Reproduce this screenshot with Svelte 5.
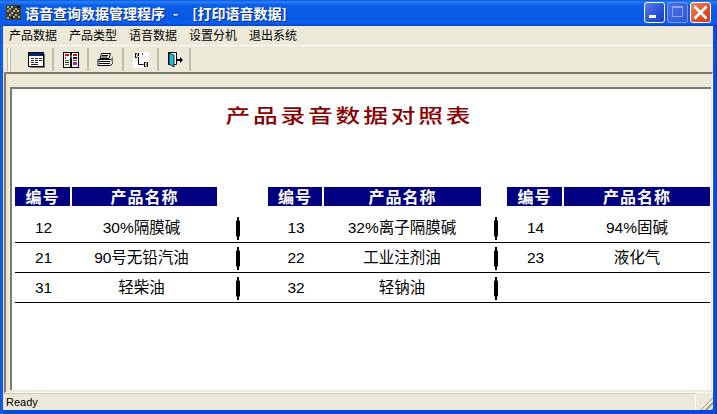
<script>
  const menus = ['产品数据', '产品类型', '语音数据', '设置分机', '退出系统'];
  const rows = [
    [['12', '30%隔膜碱'], ['13', '32%离子隔膜碱'], ['14', '94%固碱']],
    [['21', '90号无铅汽油'], ['22', '工业注剂油'], ['23', '液化气']],
    [['31', '轻柴油'], ['32', '轻钠油'], ['', '']]
  ];
</script>

<div class="window">
  <header class="titlebar">
    <svg class="appicon" width="15" height="15" viewBox="0 0 15 15">
      <rect width="15" height="15" fill="#3e3e30" />
      <path d="M1 1h2v2H1zM5 1h2v2H5zM3 3h2v2H3zM9 3h2v2H9zM1 5h2v2H1zM7 5h2v2H7zM11 5h2v2h-2zM5 7h2v2H5zM9 9h2v2H9zM3 9h2v2H3zM7 11h2v2H7zM12 11h2v2h-2zM1 12h2v2H1z" fill="#b0a880" />
      <path d="M11 1h3v2h-3zM5 12h2v2H5z" fill="#111" />
    </svg>
    <span class="title">语音查询数据管理程序<span class="dash">-</span>[打印语音数据]</span>
    <div class="caption-btns">
      <div class="cbtn min"><i></i></div>
      <div class="cbtn max"><i></i></div>
      <div class="cbtn close">
        <svg width="21" height="21" viewBox="0 0 21 21"><path d="M4.500 4.500l12 12M16.500 4.500l-12 12" stroke="#fff" stroke-width="2.600" /></svg>
      </div>
    </div>
  </header>

  <div class="frame">
    <nav class="menubar">
      {#each menus as m}
        <span class="menu">{m}</span>
      {/each}
    </nav>

    <div class="toolbar">
      <span class="grip"></span>
      <button class="tool first" aria-label="产品数据">
        <svg width="17" height="16" viewBox="0 0 17 16">
          <rect x="0.5" y="0.5" width="15" height="14" fill="#fff" stroke="#000" />
          <rect x="1" y="1" width="14" height="3" fill="#0a246a" />
          <path d="M3 6h3v1H3zM7 6h3v1H7zM11 6h3v1h-3zM3 8h3v1H3zM7 8h3v1H7zM11 8h3v1h-3zM3 10h3v1H3zM7 10h3v1H7zM3 12h7v1H3z" fill="#222" />
          <path d="M16 2h1v14H2v-1h14z" fill="#777" />
        </svg>
      </button>
      <button class="tool" aria-label="产品类型">
        <svg width="16" height="16" viewBox="0 0 16 16">
          <rect x="0.5" y="0.5" width="15" height="15" fill="#fff" stroke="#000" />
          <rect x="7" y="1" width="2" height="14" fill="#000" />
          <path d="M2 2h4v2H2zM10 2h4v2h-4zM2 5h1v2H2z" fill="#e01010" />
          <path d="M2 8h4v1H2zM10 8h4v1h-4zM2 12h4v1H2z" fill="#0a8a20" />
          <path d="M10 5h4v2h-4zM2 10h4v1H2z" fill="#222" />
          <path d="M10 10h4v3h-4z" fill="#c018b0" />
          <path d="M7 3h2v3H7z" fill="#108080" />
        </svg>
      </button>
      <button class="tool" aria-label="打印">
        <svg width="17" height="16" viewBox="0 0 17 16">
          <path d="M4.500 1.500h9l-1.500 5h-9z" fill="#fff" stroke="#000" />
          <path d="M1 7.500h14.500v4l-2 2H1z" fill="#fff" stroke="#000" />
          <path d="M2 9.500h11M2 11.500h11M5 3.500h6M4.500 5h6" stroke="#000" />
          <path d="M14 7l2-3v6l-1 2z" fill="#777" />
        </svg>
      </button>
      <button class="tool" aria-label="语音">
        <svg width="16" height="16" viewBox="0 0 16 16">
          <rect width="16" height="16" fill="#fff" />
          <path d="M5.500 5v7.500h5" fill="none" stroke="#000" />
          <path d="M2 1h2v1H3v3h1v1H2zM5 1h1v3H5z" fill="#000" />
          <rect x="4" y="2" width="1" height="3" fill="#a09020" />
          <path d="M11 10h2v1h-1v3h1v1h-2zM14 10h1v5h-1z" fill="#000" />
          <rect x="13" y="11" width="1" height="3" fill="#a09020" />
          <rect x="9" y="1" width="1" height="2" fill="#555" />
        </svg>
      </button>
      <button class="tool last" aria-label="退出">
        <svg width="16" height="18" viewBox="0 0 16 18">
          <path d="M1.500 1.500h8v12h-8z" fill="#fff" stroke="#000" />
          <path d="M2 2l5 2v12l-5-3z" fill="#18c0d8" stroke="#000" stroke-width="0.800" />
          <path d="M10 8h3V6l3 3-3 3v-2h-3z" fill="#000" />
        </svg>
      </button>
    </div>

    <main class="workspace">
      <div class="page">
        <h1><span>产品录音数据对照表</span></h1>
        <div class="report">
          {#each [0, 1, 2] as g}
            <div class="head id">编号</div>
            <div class="head">产品名称</div>
            {#if g < 2}<div></div>{/if}
          {/each}

          {#each rows as row}
            <div class="row">
              {#each row as group, g}
                <div class="cell">{group[0]}</div>
                <div class="cell name n{g}">{group[1]}</div>
                {#if g < 2}<div class="gap g{g}"><span class="tick"></span></div>{/if}
              {/each}
            </div>
          {/each}
        </div>
      </div>
    </main>

    <footer class="statusbar">
      <span class="ready">Ready</span>
      <span class="sizer"></span>
    </footer>
  </div>
</div>

<style>
  :global(body) {
    margin: 0;
    overflow: hidden;
    background: #0a3fd0;
  }

  .window {
    width: 717px;
    height: 414px;
    display: flex;
    flex-direction: column;
    background: linear-gradient(to right, #0a3cc8 0, #1a6cf0 1px, #0a48dc 3px, #0a48dc 713px, #0a5ae8 714px, #0838c0 717px);
    font-family: "Liberation Sans", "Noto Sans CJK SC", sans-serif;
    color: #000;
  }

  .titlebar {
    height: 26px;
    flex: none;
    display: flex;
    align-items: center;
    padding: 0 6px 0 6px;
    box-sizing: border-box;
    background: linear-gradient(to bottom, #0a5ae0 0, #2a80f4 2px, #0a5ee8 5px, #0458e4 18px, #0a60ee 23px, #0340c8 26px);
  }

  .appicon {
    margin-right: 4px;
    margin-bottom: 1px;
  }

  .title {
    font-family: "Noto Sans CJK SC", sans-serif;
    font-size: 14px;
    font-weight: 700;
    line-height: 16px;
    color: #fff;
    text-shadow: 1px 1px 0 #0f2a90;
    white-space: pre;
    margin-bottom: 1px;
  }

  .dash {
    margin: 0 14px 0 8px;
  }

  .caption-btns {
    margin-left: auto;
    display: flex;
    gap: 2px;
    margin-bottom: 1px;
  }

  .cbtn {
    width: 21px;
    height: 21px;
    box-sizing: border-box;
    border: 1px solid #fff;
    border-radius: 3px;
    background: linear-gradient(135deg, #5a80ec, #2a50d8 60%, #2040c0);
    position: relative;
  }

  .cbtn svg {
    position: absolute;
    left: -1px;
    top: -1px;
  }

  .cbtn.min i {
    position: absolute;
    left: 4px;
    top: 12px;
    width: 7px;
    height: 3px;
    background: #fff;
  }

  .cbtn.max {
    border-color: #7a9cf0;
    background: linear-gradient(135deg, #4a70e4, #3058d8);
  }

  .cbtn.max i {
    position: absolute;
    left: 4px;
    top: 3px;
    width: 11px;
    height: 11px;
    box-sizing: border-box;
    border: 1px solid #86a4f0;
    border-top-width: 2px;
  }

  .cbtn.close {
    background: linear-gradient(135deg, #ec8a68, #e0582e 50%, #c83a12);
  }

  .frame {
    flex: 1;
    min-height: 0;
    display: flex;
    flex-direction: column;
    margin: 0 4px 4px 3px;
    background: #ece9d8;
  }

  .menubar {
    height: 20px;
    flex: none;
    display: flex;
    align-items: center;
    gap: 12px;
    padding: 0 0 2px 6px;
    font-family: "Noto Sans CJK SC", sans-serif;
    font-size: 12px;
    border-bottom: 1px solid #fff;
    box-sizing: border-box;
  }

  .toolbar {
    height: 26px;
    flex: none;
    display: flex;
    align-items: stretch;
    padding: 2px 0 1px 4px;
    box-sizing: border-box;
  }

  .grip {
    width: 2px;
    background: #f8f6ee;
    border: 1px solid #bdbaa8;
    border-width: 0 1px;
  }

  .tool {
    appearance: none;
    border: 0;
    border-right: 2px solid #c0bdac;
    background: none;
    padding: 0;
    width: 35px;
    display: flex;
    align-items: center;
    justify-content: center;
    box-sizing: border-box;
  }

  .tool.first {
    width: 43px;
    padding-left: 9px;
  }

  .tool.last {
    width: 32px;
    padding-left: 2px;
  }

  .workspace {
    flex: 1;
    min-height: 0;
    margin-left: 1px;
    padding: 13px 2px 2px 4px;
    border-top: 2px solid #7c7a6c;
    border-left: 2px solid #7c7a6c;
    border-right: 1px solid #fff;
    border-bottom: 1px solid #fbfaf4;
    box-sizing: border-box;
    background: #ece9d8;
  }

  .page {
    height: 100%;
    box-sizing: border-box;
    background: #fff;
    border: 2px solid #7c7a6c;
    border-width: 2px 0 0 2px;
    margin-right: -1px;
    padding: 0 0 0 3px;
    overflow: hidden;
  }

  h1 {
    margin: 0;
    padding: 14px 28px 0 0;
    height: 98px;
    box-sizing: border-box;
    text-align: center;
    font-family: "Noto Sans CJK SC", sans-serif;
    font-size: 19px;
    font-weight: 500;
    line-height: 24px;
    letter-spacing: 2.200px;
    color: #8b0000;
  }

  h1 span {
    display: inline-block;
    transform: scaleX(1.3);
  }

  .report {
    display: grid;
    grid-template-columns: 57px 146px 50px 56px 158px 25px 57px 147px;
    width: 696px;
  }

  .head {
    height: 19px;
    margin-right: 1px;
    background: #000080;
    color: #fff;
    font-family: "Noto Sans CJK SC", sans-serif;
    font-weight: 700;
    font-size: 16px;
    line-height: 19px;
    text-align: center;
    letter-spacing: 1px;
  }

  .head.id {
    margin-right: 2px;
  }

  .row {
    grid-column: 1 / -1;
    display: grid;
    grid-template-columns: subgrid;
    height: 30px;
    margin-right: 1px;
    align-items: center;
    border-bottom: 1px solid #000;
    box-sizing: border-box;
  }

  .report > .row:nth-child(9) {
    height: 37px;
    padding-top: 7px;
  }

  .cell {
    text-align: center;
    font-size: 15.500px;
    line-height: 20px;
  }

  .cell.n0 {
    padding-right: 7px;
  }

  .cell.n1 {
    padding-right: 2px;
  }

  .gap {
    display: flex;
    height: 100%;
    align-items: center;
    padding-top: 2px;
    box-sizing: border-box;
  }

  .gap.g0 {
    padding-left: 18px;
  }

  .gap.g1 {
    padding-left: 12px;
  }

  .tick {
    display: block;
    width: 4px;
    height: 23px;
    background: #000;
    clip-path: polygon(25% 0, 75% 0, 75% 13%, 100% 18%, 100% 82%, 75% 87%, 75% 100%, 25% 100%, 25% 87%, 0 82%, 0 18%, 25% 13%);
  }

  .statusbar {
    height: 17px;
    flex: none;
    display: flex;
    align-items: stretch;
    font-size: 11px;
    background: #ece9d8;
  }

  .ready {
    flex: 1;
    padding-left: 3px;
    line-height: 16px;
    border-top: 1px solid #cfc8b4;
    border-right: 1px solid #fff;
    box-sizing: border-box;
  }

  .sizer {
    width: 17px;
    background: repeating-linear-gradient(135deg, transparent 0 2px, #a8a594 2px 4px);
    clip-path: polygon(100% 25%, 100% 100%, 25% 100%);
  }
</style>
